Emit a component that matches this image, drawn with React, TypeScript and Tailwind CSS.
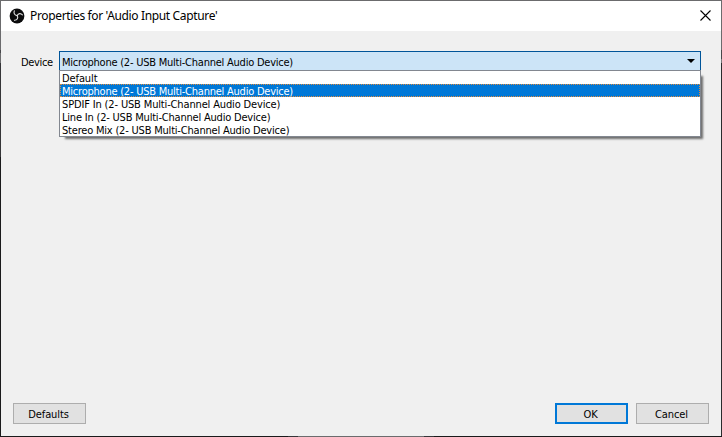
import React from "react";

const uiFont = "font-['DejaVu_Sans_Condensed','DejaVu_Sans',sans-serif] [font-stretch:condensed]";

const devices = [
  { name: "Default", spacing: "tracking-[-0.1px]" },
  { name: "Microphone (2- USB Multi-Channel Audio Device)", spacing: "tracking-[-0.23px]" },
  { name: "SPDIF In (2- USB Multi-Channel Audio Device)", spacing: "tracking-[-0.15px]" },
  { name: "Line In (2- USB Multi-Channel Audio Device)", spacing: "tracking-[-0.2px]" },
  { name: "Stereo Mix (2- USB Multi-Channel Audio Device)", spacing: "tracking-[-0.2px]" },
];

function Logo() {
  return (
    <svg width="16" height="16" viewBox="0 0 16 16" className="mb-px shrink-0">
      <circle cx="8" cy="8" r="7.4" fill="#0b0b0c" />
      <g fill="none" stroke="#dcdcdc" strokeWidth="1.15" strokeLinecap="round">
        <path d="M8.2 7.6C5.7 7.2 4.4 5.3 5.3 2.9" />
        <path d="M8.2 7.6C9.3 5.3 11.7 4.8 13.4 6.9" />
        <path d="M8.2 7.6C9.5 9.8 8.3 12 5.5 12.3" />
      </g>
    </svg>
  );
}

function Button({ label, primary = false }: { label: string; primary?: boolean }) {
  return (
    <button
      className={`flex h-[21px] w-[73px] items-center justify-center bg-[#e1e1e1] pt-[2px] pr-[2px] text-[11px] leading-[13px] tracking-[-0.1px] text-black ${
        primary ? "border-2 border-[#0078d7]" : "border border-[#adadad]"
      }`}
    >
      {label}
    </button>
  );
}

export default function App() {
  return (
    <div className={`grid h-[437px] w-[722px] grid-cols-[1px_720px_1px] grid-rows-[1px_435px_1px] overflow-hidden ${uiFont} text-black`}>
      <div className="col-span-3 bg-[#6b6b6d]" />
      <div className="bg-[linear-gradient(#6b6b6d_49px,#47474a_49px_52px,#6b6b6d_52px_62px,#353538_62px_156px,#1a1a1b_156px)]" />
      <div className="flex flex-col bg-[#f0f0f0]">
        <header className="flex h-[30px] shrink-0 items-center bg-white pr-[10px] pl-2">
          <Logo />
          <h1 className="ml-[5px] font-['Noto_Sans',sans-serif] text-[12px] leading-[16px] tracking-[-0.35px] whitespace-pre [font-stretch:normal]">
            Properties for 'Audio Input Capture'
          </h1>
          <svg width="11" height="11" viewBox="0 0 11 11" className="mb-[2px] ml-auto">
            <path d="M.5 .5 10.5 10.5M10.5 .5 .5 10.5" stroke="#000" strokeWidth="1.1" />
          </svg>
        </header>
        <main className="flex flex-1 items-start pt-5 pl-5 text-[11px]">
          <label className="w-[38px] pt-[5px] leading-[14px] tracking-[-0.35px]">Device</label>
          <div className="w-[642px]">
            <div className="flex h-[19px] items-center justify-between border border-b-0 border-[#005499] bg-[#cce4f7] pr-[5px] pl-[2px]">
              <span className="pt-[2px] leading-[13px] tracking-[-0.23px] whitespace-pre">{devices[1].name}</span>
              <svg width="8" height="4" viewBox="0 0 8 4">
                <path d="M0 0H8L4 4Z" />
              </svg>
            </div>
            <ul className="h-[67px] border border-[#828790] bg-white shadow-[4px_4px_2px_-2px_rgba(0,0,0,0.55)]">
              {devices.map((d, i) => (
                <li
                  key={d.name}
                  className={`h-[13px] pl-[2px] leading-[15px] whitespace-pre ${d.spacing} ${
                    i === 1 ? "bg-[#0078d7] text-white outline-1 -outline-offset-1 outline-dotted outline-[#e08a3c]" : ""
                  }`}
                >
                  {d.name}
                </li>
              ))}
            </ul>
          </div>
        </main>
        <footer className="flex shrink-0 px-3 pb-3">
          <Button label="Defaults" />
          <div className="ml-auto flex gap-2">
            <Button label="OK" primary />
            <Button label="Cancel" />
          </div>
        </footer>
      </div>
      <div className="bg-[linear-gradient(#6b6b6d_49px,#47474a_49px_58px,#77777a_58px_62px,#2b2b2d_62px)]" />
      <div className="col-span-3 bg-[linear-gradient(90deg,#1a1a1b_8px,#1a1a1b_288px,#353538_288px_298px,#6b6b6d_298px_424px,#353538_424px_434px,#1a1a1b_434px)]" />
    </div>
  );
}
